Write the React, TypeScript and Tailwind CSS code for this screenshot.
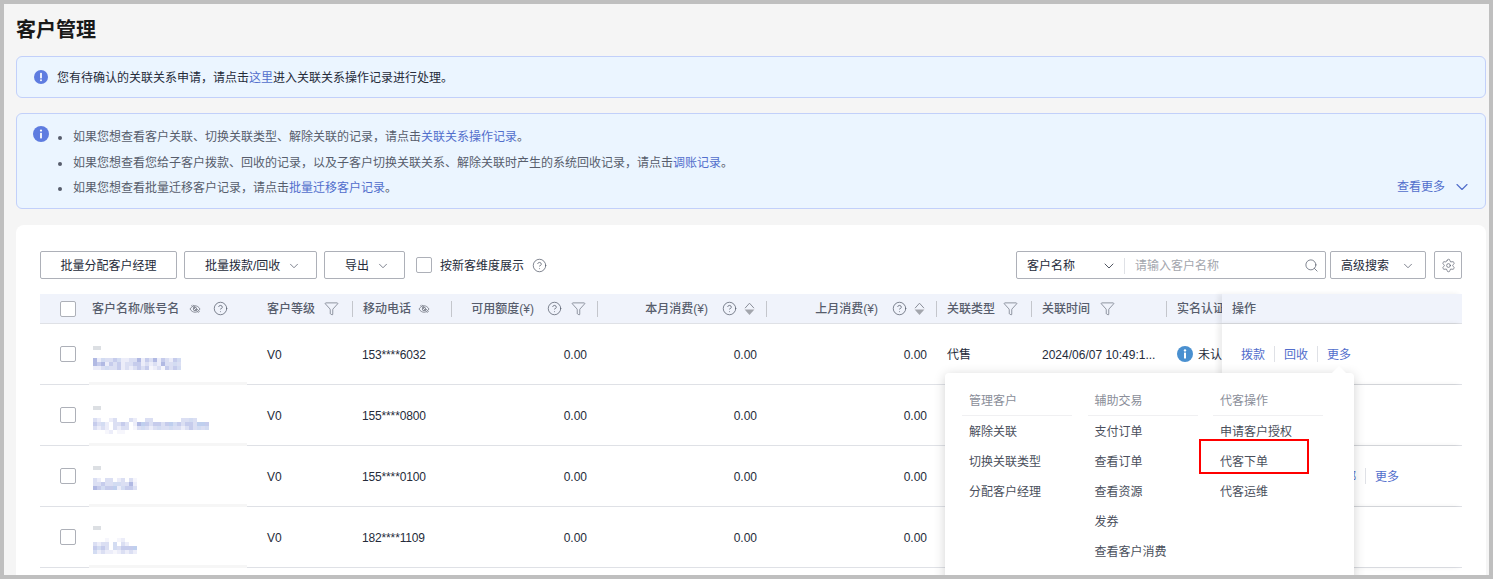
import { ChevronDown, CircleHelp, Funnel, Search, Settings } from "lucide-react";

const COLS = "grid grid-cols-[42px_175px_96px_99px_146px_169px_170px_95px_135px_55px_240px]";

const PALETTE: Record<string, string> = {
  a: "#c6ccec",
  b: "#dbdff3",
  c: "#ecedf9",
  d: "#b1b9e3",
  e: "#f6f6fc",
  g: "#d3dcf2",
  h: "#bfcfee",
};

const customers = [
  {
    top: "pt-[22px]",
    phone: "153****6032",
    mosaic: ["dcgbbagccbbdcabdcabcag", "dadcabacbbaacbcbcdbbgb", "ccbgbbacbcbabaecbeabag"],
  },
  {
    top: "pt-[21px]",
    phone: "155****0800",
    mosaic: [
      "bc..cb...bc..bb.......bbgb...",
      "abgc.bbab.cdhabaabahgabaabhha",
      "bcbc.bcbb.ebgbcbgbbgbbcbabgbg",
      "...ec.ee.....................",
    ],
  },
  {
    top: "pt-[20px]",
    phone: "155****0100",
    mosaic: ["bc.bb.cb.be", "bbabbggbbdc", "dagaahcgaab"],
  },
  {
    top: "pt-[19px]",
    phone: "182****1109",
    mosaic: ["...e..ec...", "bcbb.g.bc..", "agab.gbaaah", "gcbccecbcbc"],
  },
];

const menu = [
  { title: "管理客户", items: ["解除关联", "切换关联类型", "分配客户经理"] },
  { title: "辅助交易", items: ["支付订单", "查看订单", "查看资源", "发券", "查看客户消费"] },
  { title: "代客操作", items: ["申请客户授权", "代客下单", "代客运维"] },
];

function InfoIcon({ mark, size }: { mark: "i" | "!"; size: number }) {
  return (
    <svg width={size} height={size} viewBox="0 0 16 16" className="shrink-0">
      <circle cx="8" cy="8" r="8" fill="#5e7ce0" />
      {mark === "i" ? (
        <>
          <circle cx="8" cy="4.6" r="1.1" fill="#fff" />
          <rect x="7.1" y="6.8" width="1.8" height="5.6" rx="0.6" fill="#fff" />
        </>
      ) : (
        <>
          <rect x="7" y="3.2" width="2" height="6.4" rx="0.8" fill="#fff" />
          <circle cx="8" cy="11.8" r="1.1" fill="#fff" />
        </>
      )}
    </svg>
  );
}

function EyeOff() {
  return (
    <svg width="12" height="10" viewBox="0 0 12 10" fill="none" stroke="#8a8e99" strokeWidth="1" className="shrink-0">
      <path d="M1 5c1.4-2.2 3-3.2 5-3.2s3.6 1 5 3.2c-1.4 2.2-3 3.2-5 3.2S2.4 7.2 1 5z" />
      <circle cx="6" cy="5" r="1.7" />
      <path d="M2.5 1.2l7 7.6M4 .8l6.6 7" />
    </svg>
  );
}

function SortIcon() {
  return (
    <svg width="11" height="14" viewBox="0 0 11 14" className="shrink-0">
      <path d="M1 6.2 5.5 1.2 10 6.2" fill="none" stroke="#8a8e99" strokeWidth="1" />
      <path d="M.6 7.6h9.8L5.5 13z" fill="#a3a6ad" />
    </svg>
  );
}

function Help({ size = 15 }: { size?: number }) {
  return <CircleHelp size={size} strokeWidth={1.2} color="#575d6c" className="shrink-0" />;
}

function FilterIcon() {
  return <Funnel size={15} strokeWidth={1} color="#575d6c" className="shrink-0" />;
}

function Checkbox() {
  return <span className="block h-4 w-4 rounded-[2px] border border-[#adb0b8] bg-white" />;
}

function Sep() {
  return <span className="h-4 w-px shrink-0 bg-[#c4c6cc]" />;
}

function Mosaic({ rows }: { rows: string[] }) {
  return (
    <svg width={120} height={rows.length * 4} className="block">
      {rows.map((row, y) =>
        row.split("").map((c, x) =>
          PALETTE[c] ? <rect key={`${x}-${y}`} x={x * 4} y={y * 4} width="4" height="4" fill={PALETTE[c]} /> : null,
        ),
      )}
    </svg>
  );
}

function Toolbar() {
  return (
    <div className="flex h-7 items-stretch text-xs text-[#252b3a]">
      <button className="w-[137px] rounded-[2px] border border-[#adb0b8] pt-px">批量分配客户经理</button>
      <button className="ml-[7px] flex w-[133px] items-center gap-[7px] rounded-[2px] border border-[#adb0b8] pl-5 pt-px">
        批量拨款/回收 <ChevronDown size={14} strokeWidth={1.3} color="#575d6c" />
      </button>
      <button className="ml-[7px] flex w-[81px] items-center gap-[7px] rounded-[2px] border border-[#adb0b8] pl-5 pt-px">
        导出 <ChevronDown size={14} strokeWidth={1.3} color="#575d6c" />
      </button>
      <label className="ml-[11px] flex items-center">
        <Checkbox />
        <span className="ml-2 pt-px">按新客维度展示</span>
        <span className="ml-2">
          <Help />
        </span>
      </label>
      <div className="ml-auto flex w-[310px] items-center rounded-[2px] border border-[#adb0b8] pt-px">
        <span className="ml-[10px] w-[74px]">客户名称</span>
        <ChevronDown size={16} strokeWidth={1.2} color="#252b3a" />
        <span className="ml-[7px] h-4 w-px bg-[#dfe1e6]" />
        <span className="ml-[10px] text-[#a3a6ad]">请输入客户名称</span>
        <Search size={15} strokeWidth={1.2} color="#575d6c" className="ml-auto mr-[6px]" />
      </div>
      <button className="ml-1 flex w-[96px] items-center justify-center gap-[12px] rounded-[2px] border border-[#adb0b8] pt-px">
        高级搜索 <ChevronDown size={14} strokeWidth={1.3} color="#575d6c" />
      </button>
      <button className="ml-2 flex w-7 items-center justify-center rounded-[2px] border border-[#adb0b8]">
        <Settings size={15} strokeWidth={1.1} color="#575d6c" />
      </button>
    </div>
  );
}

function HeaderRow() {
  return (
    <div className={`${COLS} mt-[15px] h-[30px] border-b border-[#dfe1e6] bg-[#f0f3fb] text-xs font-medium text-[#575d6c]`}>
      <div className="flex items-center pl-5">
        <Checkbox />
      </div>
      <div className="flex items-center pl-[10px]">
        <span>客户名称/账号名</span>
        <span className="ml-[10px]">
          <EyeOff />
        </span>
        <span className="ml-3">
          <Help />
        </span>
        <span className="ml-auto">
          <Sep />
        </span>
      </div>
      <div className="flex items-center justify-between pl-[10px]">
        <span>客户等级</span>
        <span className="ml-[9px] mr-auto">
          <FilterIcon />
        </span>
        <Sep />
      </div>
      <div className="flex items-center pl-[10px]">
        <span>移动电话</span>
        <span className="ml-[7px] mr-auto">
          <EyeOff />
        </span>
        <Sep />
      </div>
      <div className="flex items-center justify-end">
        <span>可用额度(¥)</span>
        <span className="ml-[13px]">
          <Help />
        </span>
        <span className="ml-[9px] mr-[11px]">
          <FilterIcon />
        </span>
        <Sep />
      </div>
      <div className="flex items-center justify-end">
        <span>本月消费(¥)</span>
        <span className="ml-[14px]">
          <Help />
        </span>
        <span className="ml-[7px] mr-[11px]">
          <SortIcon />
        </span>
        <Sep />
      </div>
      <div className="flex items-center justify-end">
        <span>上月消费(¥)</span>
        <span className="ml-[14px]">
          <Help />
        </span>
        <span className="ml-[7px] mr-[11px]">
          <SortIcon />
        </span>
        <Sep />
      </div>
      <div className="flex items-center pl-[10px]">
        <span>关联类型</span>
        <span className="ml-[8px] mr-auto">
          <FilterIcon />
        </span>
        <Sep />
      </div>
      <div className="flex items-center pl-[10px]">
        <span>关联时间</span>
        <span className="ml-[10px] mr-auto">
          <FilterIcon />
        </span>
        <Sep />
      </div>
      <div className="flex items-center overflow-hidden whitespace-nowrap pl-[10px]">实名认证</div>
      <div className="z-10 flex items-center bg-[#f0f3fb] pl-[10px] shadow-[-4px_0_5px_rgba(0,0,0,0.07)]">操作</div>
    </div>
  );
}

function Op({ children, className = "" }: { children: string; className?: string }) {
  return <span className={`pt-px text-[#526ecc] ${className}`}>{children}</span>;
}

function OpSep() {
  return <span className="mx-[9px] h-4 w-px bg-[#dfe1e6]" />;
}

function CustomerRow({ customer, wide }: { customer: (typeof customers)[number]; wide: boolean }) {
  return (
    <div className={`${COLS} h-[61px] border-b border-[#dfe1e6] text-xs text-[#252b3a]`}>
      <div className="flex items-center pl-5">
        <Checkbox />
      </div>
      <div className={`relative pl-[11px] ${customer.top}`}>
        <div className="h-1 w-2 bg-[#dcdfe3]" />
        <div className="mt-[8px]">
          <Mosaic rows={customer.mosaic} />
        </div>
        <div className="absolute -bottom-px left-[7px] h-[3px] w-[158px] bg-[#f6f6f6]" />
      </div>
      <div className="flex items-center pl-[10px] pt-[2px]">V0</div>
      <div className="flex items-center pl-[9px] pt-[2px] tracking-[-0.15px]">{customer.phone}</div>
      <div className="flex items-center justify-end pr-[11px] pt-[2px]">0.00</div>
      <div className="flex items-center justify-end pr-[10px] pt-[2px]">0.00</div>
      <div className="flex items-center justify-end pr-[10px] pt-[2px]">0.00</div>
      <div className="flex items-center pl-[10px] pt-[2px]">代售</div>
      <div className="flex items-center pl-[10px] pt-[2px]">2024/06/07 10:49:1...</div>
      <div className="flex items-center overflow-hidden whitespace-nowrap pl-[10px]">
        <svg width="16" height="16" viewBox="0 0 16 16" className="shrink-0">
          <circle cx="8" cy="8" r="8" fill="#4a90d0" />
          <circle cx="8" cy="4.4" r="1.2" fill="#fff" />
          <rect x="7" y="6.6" width="2" height="6" rx="0.5" fill="#fff" />
        </svg>
        <span className="ml-[5px] pt-px">未认证</span>
      </div>
      <div className="z-10 flex items-center bg-white pl-[19px] shadow-[-4px_0_5px_rgba(0,0,0,0.07)]">
        <Op>拨款</Op>
        <OpSep />
        <Op>回收</Op>
        <OpSep />
        {wide ? (
          <>
            <Op className="w-[29px] text-right">解绑</Op>
            <OpSep />
          </>
        ) : null}
        <Op>更多</Op>
      </div>
    </div>
  );
}

function MoreMenu() {
  return (
    <div className="absolute left-[941px] top-[369px] z-20 h-[230px] w-[409px] rounded-[4px] bg-white pl-[17px] pt-[10px] text-xs shadow-[0_2px_12px_rgba(0,0,0,0.18)]">
      <span className="absolute left-[389px] top-[-5px] h-[10px] w-[10px] rotate-45 bg-white" />
      <div className="flex gap-[15.5px]">
        {menu.map((group) => (
          <div key={group.title} className="w-[110px]">
            <div className="flex h-[33px] items-center border-b border-[#f0f0f2] pl-[7px] pt-[3px] text-[#8a8e99]">{group.title}</div>
            {group.items.map((item) => (
              <div key={item} className="flex h-[30px] items-center pl-[7px] pt-[2px] text-[#4a4f5c]">
                {item}
              </div>
            ))}
          </div>
        ))}
      </div>
      <div className="absolute left-[254px] top-[66px] h-[35px] w-[110px] border-2 border-[#ff0000]" />
    </div>
  );
}

export default function App() {
  return (
    <div className="relative box-border flex h-[579px] w-[1493px] flex-col overflow-hidden border-4 border-[#bfbfbf] bg-[#f5f5f5] pl-3 pr-[3px] font-['Liberation_Sans','Noto_Sans_CJK_SC',sans-serif]">
      <h1 className="mt-3 h-[26px] pt-px text-xl font-bold leading-[26px] text-[#191919]">客户管理</h1>
      <div className="mt-[14px] flex h-[42px] items-center rounded-[6px] border border-[#c2d0fa] bg-[#ebf5ff] pl-[17px] text-xs text-[#252b3a]">
        <InfoIcon mark="!" size={14} />
        <span className="ml-[9px] pt-[2px]">
          您有待确认的关联关系申请，请点击<span className="text-[#526ecc]">这里</span>进入关联关系操作记录进行处理。
        </span>
      </div>
      <div className="relative mt-[15px] flex h-[96px] rounded-[6px] border border-[#c2d0fa] bg-[#ebf5ff] pl-4 pt-3 text-xs text-[#575d6c]">
        <InfoIcon mark="i" size={16} />
        <ul className="ml-[9px] flex flex-col">
          <li className="flex h-[25.5px] items-start pt-[3px]">
            <span className="mr-[11px] mt-[7px] h-1 w-1 rounded-full bg-[#575d6c]" />
            <span>
              如果您想查看客户关联、切换关联类型、解除关联的记录，请点击<span className="text-[#526ecc]">关联关系操作记录</span>。
            </span>
          </li>
          <li className="flex h-[25.5px] items-start pt-[3px]">
            <span className="mr-[11px] mt-[7px] h-1 w-1 rounded-full bg-[#575d6c]" />
            <span>
              如果您想查看您给子客户拨款、回收的记录，以及子客户切换关联关系、解除关联时产生的系统回收记录，请点击
              <span className="text-[#526ecc]">调账记录</span>。
            </span>
          </li>
          <li className="flex h-[25.5px] items-start pt-[3px]">
            <span className="mr-[11px] mt-[7px] h-1 w-1 rounded-full bg-[#575d6c]" />
            <span>
              如果您想查看批量迁移客户记录，请点击<span className="text-[#526ecc]">批量迁移客户记录</span>。
            </span>
          </li>
        </ul>
        <div className="absolute bottom-[11px] right-[13px] flex items-center text-[#526ecc]">
          <span>查看更多</span>
          <ChevronDown size={20} strokeWidth={1.4} className="ml-[7px]" />
        </div>
      </div>
      <div className="mt-4 flex-1 rounded-t-[8px] bg-white px-6 pt-[26px]">
        <Toolbar />
        <HeaderRow />
        {customers.map((customer, i) => (
          <CustomerRow key={customer.phone} customer={customer} wide={i === 2} />
        ))}
      </div>
      <MoreMenu />
    </div>
  );
}
